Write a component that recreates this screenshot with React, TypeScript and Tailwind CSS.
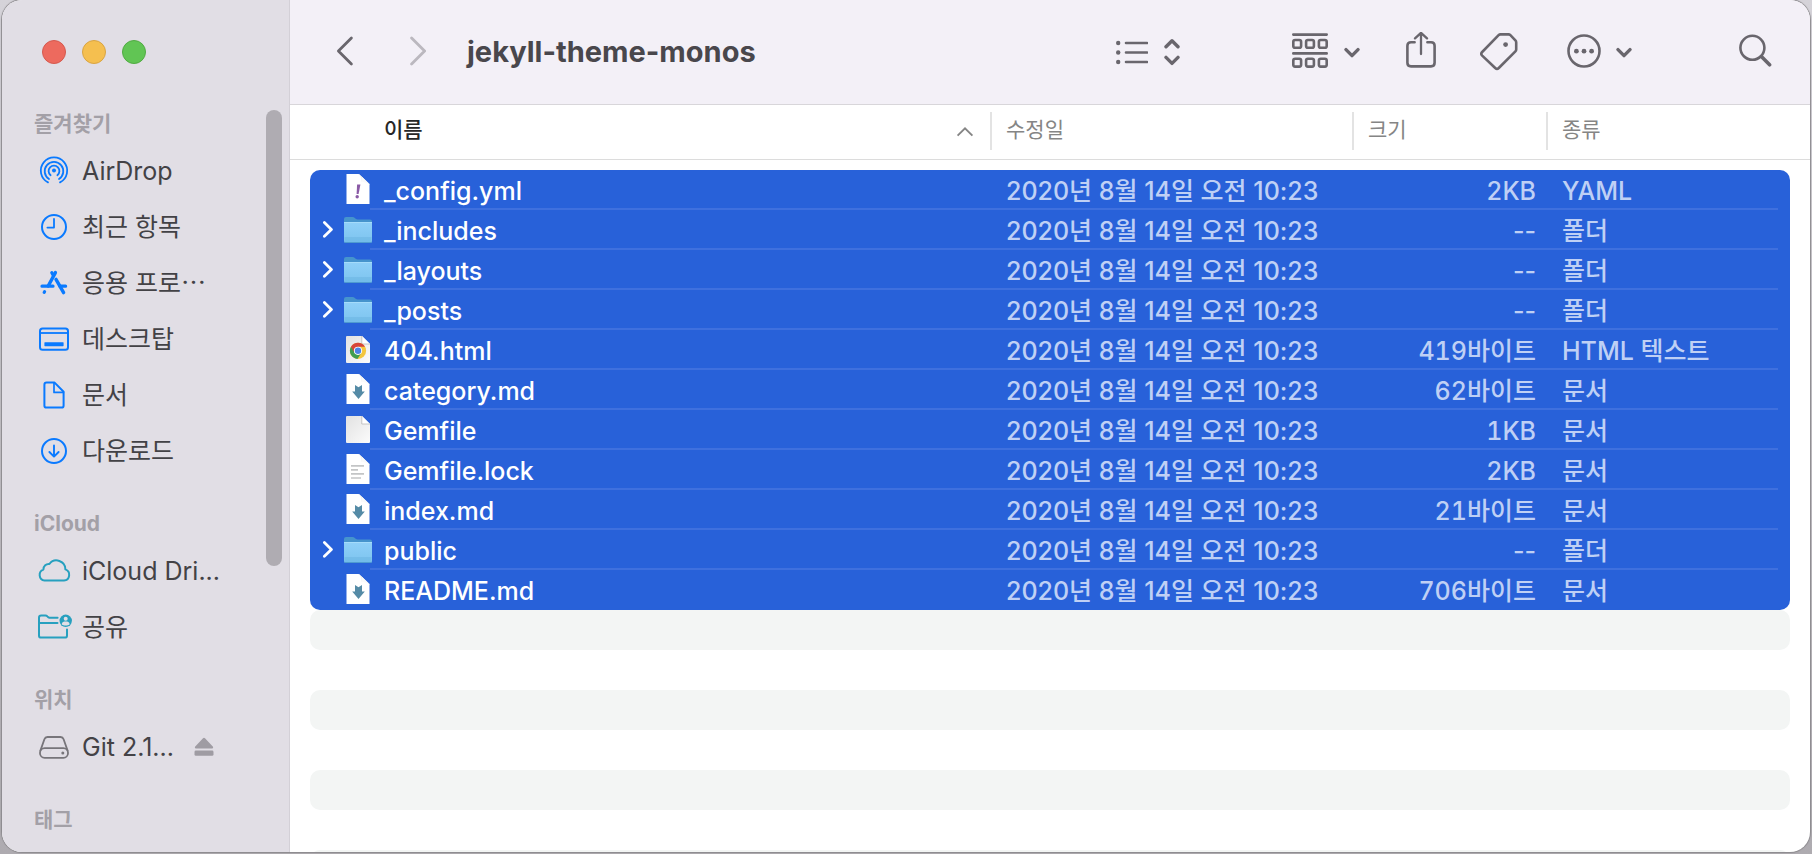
import type { ReactNode } from 'react';

type FileIconName = 'yaml' | 'folder' | 'chrome' | 'markdown' | 'blank' | 'text';

type FileRow = { name: string; icon: FileIconName; size: string; kind: string };

const MODIFIED = '2020년 8월 14일 오전 10:23';

const FILES: FileRow[] = [
  { name: '_config.yml', icon: 'yaml', size: '2KB', kind: 'YAML' },
  { name: '_includes', icon: 'folder', size: '--', kind: '폴더' },
  { name: '_layouts', icon: 'folder', size: '--', kind: '폴더' },
  { name: '_posts', icon: 'folder', size: '--', kind: '폴더' },
  { name: '404.html', icon: 'chrome', size: '419바이트', kind: 'HTML 텍스트' },
  { name: 'category.md', icon: 'markdown', size: '62바이트', kind: '문서' },
  { name: 'Gemfile', icon: 'blank', size: '1KB', kind: '문서' },
  { name: 'Gemfile.lock', icon: 'text', size: '2KB', kind: '문서' },
  { name: 'index.md', icon: 'markdown', size: '21바이트', kind: '문서' },
  { name: 'public', icon: 'folder', size: '--', kind: '폴더' },
  { name: 'README.md', icon: 'markdown', size: '706바이트', kind: '문서' },
];

/* ---------- File icons ---------- */

function FolderIcon() {
  return (
    <svg width="28" height="28" viewBox="0 0 28 28" aria-hidden="true">
      <defs>
        <linearGradient id="folder-front" x1="0" y1="0" x2="0" y2="1">
          <stop offset="0" stopColor="#8fd0f8" />
          <stop offset="1" stopColor="#7cc3ef" />
        </linearGradient>
      </defs>
      <path d="M0 3Q0 1 2 1H8.5Q9.8 1 10.8 2L12 3.1Q12.6 3.5 13.6 3.5H26Q28 3.5 28 5.5V12H0Z" fill="#4694cd" />
      <path d="M0 6.5H28V25Q28 27 26 27H2Q0 27 0 25Z" fill="url(#folder-front)" />
      <path d="M0 6.5H28" stroke="#a5dcfb" strokeWidth="1" />
      <path d="M0.5 22H27.5M0.5 24H27.5" stroke="#62aedd" strokeWidth="0.8" />
      <path d="M0.5 26.4H27.5" stroke="#4e9bd0" strokeWidth="1.2" />
    </svg>
  );
}

function PageIcon({ children, shaded = false }: { children?: ReactNode; shaded?: boolean }) {
  return (
    <svg width="28" height="32" viewBox="0 1 28 32" aria-hidden="true">
      <defs>
        <linearGradient id="page-fill" x1="0" y1="0" x2="1" y2="1">
          <stop offset="0" stopColor="#e2e2e2" />
          <stop offset="1" stopColor="#fbfbfb" />
        </linearGradient>
      </defs>
      {shaded ? (
        <>
          <path d="M3 3H18L26 11V29Q26 30 25 30H3Q2 30 2 29V4Q2 3 3 3Z" fill="url(#page-fill)" />
          <path d="M18 3L26 11H18Z" fill="#fff" />
          <path d="M17.8 3V11H26" fill="none" stroke="#b9b9b9" strokeWidth="0.8" />
        </>
      ) : (
        <>
          <path d="M2.5 1H15L25.5 11V31H2.5Z" fill="#fff" />
          <path d="M14 1H15L25.5 11V12C24 8.6 21 7.6 17 8.2C18 5 17 2.6 14 1Z" fill="#e2e3e6" />
          <path d="M17 8.2L24.6 10.4L17.6 3.6Z" fill="#f9f9f9" />
        </>
      )}
      {children}
    </svg>
  );
}

function ChromeBadge() {
  return (
    <g>
      <circle cx="14" cy="17.8" r="8.1" fill="#f4c63d" />
      <path d="M14 17.8L7 13.7A8.1 8.1 0 0 0 13.4 25.9L17.5 19.8Z" fill="#3f9d50" />
      <path d="M7 13.7A8.1 8.1 0 0 1 21 13.7H14V17.8L10.5 19.8Z" fill="#d6453a" />
      <circle cx="14" cy="17.8" r="4.1" fill="#fff" />
      <circle cx="14" cy="17.8" r="3.2" fill="#4c82e4" />
    </g>
  );
}

function FileIcon({ icon }: { icon: FileIconName }) {
  switch (icon) {
    case 'folder':
      return <FolderIcon />;
    case 'yaml':
      return (
        <PageIcon>
          <path d="M13.1 11.6H16.4L14.6 21H12.6Z" fill="#8a5aa5" />
          <circle cx="13.2" cy="23.8" r="1.7" fill="#8a5aa5" />
        </PageIcon>
      );
    case 'chrome':
      return (
        <PageIcon shaded>
          <ChromeBadge />
        </PageIcon>
      );
    case 'markdown':
      return (
        <PageIcon>
          <path d="M11 12L14.5 14.2L18 12V18.6H20.8L14.5 26L8.2 18.6H11Z" fill="#558ba6" />
        </PageIcon>
      );
    case 'blank':
      return <PageIcon shaded />;
    case 'text':
      return (
        <PageIcon>
          <path d="M7 12.8H20M7 16.8H14M7 20.8H20M7 25H17" stroke="#c3c5c6" strokeWidth="1.7" />
        </PageIcon>
      );
  }
}

/* ---------- Sidebar ---------- */

function StrokeIcon({ children, color }: { children: ReactNode; color: string }) {
  return (
    <svg
      width="36"
      height="32"
      viewBox="0 0 36 32"
      fill="none"
      stroke={color}
      strokeWidth="2"
      strokeLinecap="round"
      strokeLinejoin="round"
      aria-hidden="true"
      className="shrink-0"
    >
      {children}
    </svg>
  );
}

const BLUE = '#0a7aff';
const TEAL = '#27a0bf';
const GREY = '#77757a';

const airDropIcon = (
  <StrokeIcon color={BLUE}>
    <circle cx="18" cy="15.6" r="2" fill={BLUE} stroke="none" />
    <path d="M14.6 20.2A5.4 5.4 0 1 1 21.4 20.2" strokeWidth="1.8" />
    <path d="M13 24A9.3 9.3 0 1 1 23 24" strokeWidth="1.8" />
    <path d="M12 27.4A13.2 13.2 0 1 1 24 27.4" strokeWidth="1.8" />
  </StrokeIcon>
);

const recentsIcon = (
  <StrokeIcon color={BLUE}>
    <circle cx="18" cy="16" r="12" />
    <path d="M18 8V16.6H11.4" strokeWidth="1.8" />
  </StrokeIcon>
);

const appsIcon = (
  <StrokeIcon color={BLUE}>
    <path d="M19.4 5.6L12.2 19" strokeWidth="3.4" />
    <path d="M15.8 5.6L17.4 8.4" strokeWidth="3.2" />
    <path d="M20 12.4L27.6 25.6" strokeWidth="3.4" />
    <path d="M6 19.2H17M24 19.2H29.6" strokeWidth="3.2" />
    <path d="M8.6 24.6L8.2 25.4" strokeWidth="3.2" />
  </StrokeIcon>
);

const desktopIcon = (
  <StrokeIcon color={BLUE}>
    <rect x="4" y="5.4" width="28" height="21.4" rx="2.6" />
    <path d="M4 10H32" strokeWidth="1.8" strokeLinecap="butt" />
    <rect x="8.4" y="19.2" width="19.2" height="4" rx="0.6" fill={BLUE} stroke="none" />
  </StrokeIcon>
);

const documentIcon = (
  <StrokeIcon color={BLUE}>
    <path d="M10.6 3.6H18.6L27.6 12.8V26.4Q27.6 28.6 25.4 28.6H10.6Q8.4 28.6 8.4 26.4V5.8Q8.4 3.6 10.6 3.6Z" />
    <path d="M18 4V13.4H27.4" strokeWidth="1.7" />
  </StrokeIcon>
);

const downloadIcon = (
  <StrokeIcon color={BLUE}>
    <circle cx="18" cy="16" r="12" />
    <path d="M18 10.4V21.2M13.4 17L18 21.6L22.6 17" strokeWidth="1.9" />
  </StrokeIcon>
);

const cloudIcon = (
  <StrokeIcon color={TEAL}>
    <path d="M8.6 25.6A5.7 5.7 0 0 1 7.4 14.6C7.4 11 10.2 8.6 13.4 9A8.9 8.9 0 0 1 29.4 14.4A5.8 5.8 0 0 1 28 25.6Z" strokeWidth="2" />
  </StrokeIcon>
);

const sharedIcon = (
  <StrokeIcon color={TEAL}>
    <path d="M31 18.6V24.4Q31 26.6 28.8 26.6H5.2Q3 26.6 3 24.4V6.8Q3 4.6 5.2 4.6H9.4Q10.6 4.6 11.4 5.4L12.6 6.4Q13.2 6.8 14.2 6.8H21.6" strokeWidth="2" />
    <path d="M3 12H21.6" strokeWidth="1.8" />
    <circle cx="29.7" cy="9.8" r="6.2" fill={TEAL} stroke="none" />
    <circle cx="29.7" cy="7.8" r="2" fill="#e1dee5" stroke="none" />
    <path d="M25.7 13.2C26.1 10.9 27.7 10.6 29.7 10.6S33.3 10.9 33.7 13.2C32.5 14.3 31.3 14.5 29.7 14.5S26.9 14.3 25.7 13.2Z" fill="#e1dee5" stroke="none" />
  </StrokeIcon>
);

const driveIcon = (
  <StrokeIcon color={GREY}>
    <path d="M4.4 19.6L8.4 8.2Q9.2 6 11.4 6H24.6Q26.8 6 27.6 8.2L31.6 19.6" strokeWidth="1.8" />
    <rect x="4" y="17.2" width="28" height="9.6" rx="4.6" strokeWidth="1.8" />
    <circle cx="26.8" cy="22" r="1.5" fill={GREY} stroke="none" />
  </StrokeIcon>
);

type SidebarEntry = { label: string; icon: ReactNode; ejectable?: boolean };

const SECTIONS: { title: string; items: SidebarEntry[] }[] = [
  {
    title: '즐겨찾기',
    items: [
      { label: 'AirDrop', icon: airDropIcon },
      { label: '최근 항목', icon: recentsIcon },
      { label: '응용 프로⋯', icon: appsIcon },
      { label: '데스크탑', icon: desktopIcon },
      { label: '문서', icon: documentIcon },
      { label: '다운로드', icon: downloadIcon },
    ],
  },
  {
    title: 'iCloud',
    items: [
      { label: 'iCloud Dri...', icon: cloudIcon },
      { label: '공유', icon: sharedIcon },
    ],
  },
  { title: '위치', items: [{ label: 'Git 2.1...', icon: driveIcon, ejectable: true }] },
  { title: '태그', items: [] },
];

function Sidebar() {
  return (
    <aside className="relative flex w-72 shrink-0 flex-col overflow-hidden border-r border-[#d3d0d7] bg-[#e1dee5]">
      <div className="flex h-20 shrink-0 items-center gap-4 pt-6 pl-10">
        <button type="button" aria-label="닫기" className="size-6 rounded-full border border-[#d5594e] bg-[#ed6a5e]" />
        <button type="button" aria-label="최소화" className="size-6 rounded-full border border-[#d9a443] bg-[#f5bf4f]" />
        <button type="button" aria-label="확대" className="size-6 rounded-full border border-[#51ab43] bg-[#61c554]" />
      </div>
      <nav aria-label="사이드바">
        {SECTIONS.map((section) => (
          <section key={section.title}>
            <h2 className="flex h-16 items-center pt-6 pl-8 text-[21px] font-bold text-[#a3a0a7]">{section.title}</h2>
            <ul>
              {section.items.map((item) => (
                <li key={item.label} className="flex h-14 items-center pb-0.5 pl-[34px]">
                  <a href="#" className="flex items-center gap-2.5 text-[25px] whitespace-nowrap text-[#434246]">
                    {item.icon}
                    <span className="pt-0.5">{item.label}</span>
                  </a>
                  {item.ejectable && (
                    <button type="button" aria-label="추출" className="ml-5">
                      <svg width="20" height="20" viewBox="0 0 20 20" fill="#9f9ca3" aria-hidden="true">
                        <path d="M10 0.8Q10.6 0.8 11 1.3L19 9.8Q19.6 11.2 18.4 11.4H1.6Q0.4 11.2 1 9.8L9 1.3Q9.4 0.8 10 0.8Z" />
                        <rect x="0.5" y="13.6" width="19" height="5.2" rx="1.4" />
                      </svg>
                    </button>
                  )}
                </li>
              ))}
            </ul>
          </section>
        ))}
      </nav>
      <div className="absolute top-[110px] right-[7px] h-[456px] w-4 rounded-full bg-[#afacb2]" />
    </aside>
  );
}

/* ---------- Toolbar ---------- */

function ToolIcon({ width, children }: { width: number; children: ReactNode }) {
  return (
    <svg
      width={width}
      height="40"
      viewBox={`0 0 ${width} 40`}
      fill="none"
      stroke="#69666d"
      strokeWidth="2.6"
      strokeLinecap="round"
      strokeLinejoin="round"
      aria-hidden="true"
    >
      {children}
    </svg>
  );
}

function DownChevron() {
  return (
    <ToolIcon width={16}>
      <path d="M2 17.6L8 23.6L14 17.6" strokeWidth="3.4" />
    </ToolIcon>
  );
}

function Toolbar() {
  return (
    <header className="flex h-[105px] shrink-0 items-center border-b border-[#d8d6da] bg-[#f3f0f7] pr-[38px] pl-[46px]">
      <button type="button" aria-label="뒤로">
        <ToolIcon width={18}>
          <path d="M15.4 6L2.4 19L15.4 32" strokeWidth="2.8" />
        </ToolIcon>
      </button>
      <button type="button" aria-label="앞으로" className="ml-[55px] opacity-40">
        <ToolIcon width={18}>
          <path d="M2.6 6L15.6 19L2.6 32" strokeWidth="2.8" />
        </ToolIcon>
      </button>
      <h1 className="ml-10 flex-1 text-[29px] font-bold text-[#49474c]">jekyll-theme-monos</h1>
      <button type="button" aria-label="목록 보기" className="flex items-center gap-4">
        <ToolIcon width={32}>
          <path d="M10 11H31M10 20.5H31M10 30H31" />
          <g fill="#69666d" stroke="none">
            <circle cx="2.2" cy="11" r="2.2" />
            <circle cx="2.2" cy="20.5" r="2.2" />
            <circle cx="2.2" cy="30" r="2.2" />
          </g>
        </ToolIcon>
        <ToolIcon width={16}>
          <path d="M2 14.8L8 8.8L14 14.8M2 25.4L8 31.4L14 25.4" strokeWidth="3.4" />
        </ToolIcon>
      </button>
      <button type="button" aria-label="그룹" className="ml-28 flex items-center gap-4">
        <ToolIcon width={36}>
          <path d="M1.3 2.6H34.7M1.3 21.4H34.7" />
          <rect x="1.3" y="8" width="7.8" height="7.8" rx="1.8" />
          <rect x="14.1" y="8" width="7.8" height="7.8" rx="1.8" />
          <rect x="26.9" y="8" width="7.8" height="7.8" rx="1.8" />
          <rect x="1.3" y="26.8" width="7.8" height="7.8" rx="1.8" />
          <rect x="14.1" y="26.8" width="7.8" height="7.8" rx="1.8" />
          <rect x="26.9" y="26.8" width="7.8" height="7.8" rx="1.8" />
        </ToolIcon>
        <DownChevron />
      </button>
      <button type="button" aria-label="공유" className="ml-[46px]">
        <ToolIcon width={30}>
          <path d="M8.6 10.2H5Q1.4 10.2 1.4 13.8V30.8Q1.4 34.4 5 34.4H25Q28.6 34.4 28.6 30.8V13.8Q28.6 10.2 25 10.2H21.4" />
          <path d="M15 22V1.4M9 6.4L15 0.8L21 6.4" strokeWidth="2.3" />
        </ToolIcon>
      </button>
      <button type="button" aria-label="태그" className="ml-11">
        <ToolIcon width={38}>
          <path d="M20.6 2.4H28.4Q29.6 2.4 30.4 3.2L35.4 8.4Q36.2 9.2 36.2 10.4V17.4Q36.2 18.6 35.4 19.4L18.8 36Q17 37.6 15.2 36L2.2 23.6Q0.4 21.8 2.2 20L18.6 3.2Q19.4 2.4 20.6 2.4Z" strokeWidth="2.6" />
          <circle cx="25.6" cy="12.6" r="2.4" fill="#69666d" stroke="none" />
        </ToolIcon>
      </button>
      <button type="button" aria-label="동작" className="ml-[49px] flex items-center gap-[15px]">
        <ToolIcon width={34}>
          <circle cx="17" cy="19" r="15.5" />
          <g fill="#69666d" stroke="none">
            <circle cx="9.4" cy="19.2" r="2.4" />
            <circle cx="17" cy="19.2" r="2.4" />
            <circle cx="24.6" cy="19.2" r="2.4" />
          </g>
        </ToolIcon>
        <DownChevron />
      </button>
      <button type="button" aria-label="검색" className="ml-[107px]">
        <ToolIcon width={33}>
          <circle cx="13.4" cy="15.8" r="12" />
          <path d="M22.4 24.6L30.6 32.8" strokeWidth="3.6" />
        </ToolIcon>
      </button>
    </header>
  );
}

/* ---------- File list ---------- */

function HeaderCell({ label }: { label: string }) {
  return (
    <th scope="col" className="border-b border-[#dcdcdc] p-0 pt-[7px] pb-[9px] text-left font-normal">
      <div className="flex h-[38px] items-center border-l-2 border-[#e3e3e3] pb-0.5 pl-3.5 text-[#858585]">{label}</div>
    </th>
  );
}

function FileTable() {
  return (
    <table className="w-full shrink-0 table-fixed border-separate border-spacing-0">
      <colgroup>
        <col />
        <col className="w-[362px]" />
        <col className="w-[194px]" />
        <col className="w-[264px]" />
      </colgroup>
      <thead>
        <tr className="text-[21px]">
          <th scope="col" aria-sort="ascending" className="border-b border-[#dcdcdc] p-0 pt-[7px] pb-[9px] text-left font-medium">
            <button type="button" className="flex h-[38px] w-full items-center justify-between pr-4 pb-0.5 pl-[94px] text-[#272727]">
              이름
              <svg width="18" height="12" viewBox="0 0 18 12" fill="none" stroke="#858585" strokeWidth="1.9" className="mt-1" aria-hidden="true">
                <path d="M1.6 9.6L9 2.4L16.4 9.6" />
              </svg>
            </button>
          </th>
          <HeaderCell label="수정일" />
          <HeaderCell label="크기" />
          <HeaderCell label="종류" />
        </tr>
      </thead>
      <tbody className="text-[25px] font-medium text-[#bfd0f5]">
        <tr aria-hidden="true" className="h-2.5">
          <td colSpan={4} className="p-0" />
        </tr>
        {FILES.map((file, index) => {
          const first = index === 0;
          const last = index === FILES.length - 1;
          const line = last ? 'border-b-2 border-transparent' : 'border-b-2 border-[#3f70de]';
          const digits = file.icon === 'folder' ? '' : 'tabular-nums';
          return (
            <tr key={file.name} className="h-10 whitespace-nowrap">
              <td className="p-0 pl-5">
                <div className={`flex h-10 bg-[#2861d9] ${first ? 'rounded-tl-[10px]' : ''} ${last ? 'rounded-bl-[10px]' : ''}`}>
                  <div className="flex w-[60px] shrink-0 items-center pl-3">
                    <span className="flex w-[22px] shrink-0">
                      {file.icon === 'folder' && (
                        <button type="button" aria-label={`${file.name} 펼치기`}>
                          <svg width="12" height="18" viewBox="0 0 12 18" fill="none" stroke="#fff" strokeWidth="2.8" strokeLinecap="round" strokeLinejoin="round" aria-hidden="true">
                            <path d="M2.4 1.6L9.4 8.4L2.4 15.2" />
                          </svg>
                        </button>
                      )}
                    </span>
                    <span className="shrink-0">
                      <FileIcon icon={file.icon} />
                    </span>
                  </div>
                  <div className={`flex flex-1 items-center pt-1.5 pl-3.5 text-white ${line}`}>{file.name}</div>
                </div>
              </td>
              <td className="p-0">
                <div className="h-10 bg-[#2861d9]">
                  <div className={`flex h-10 items-center pt-1.5 pl-4 ${line}`}>{MODIFIED}</div>
                </div>
              </td>
              <td className="p-0">
                <div className="h-10 bg-[#2861d9]">
                  <div className={`flex h-10 items-center justify-end pt-1.5 pr-2.5 ${digits} ${line}`}>{file.size}</div>
                </div>
              </td>
              <td className="p-0 pr-5">
                <div className={`h-10 bg-[#2861d9] pr-3 ${first ? 'rounded-tr-[10px]' : ''} ${last ? 'rounded-br-[10px]' : ''}`}>
                  <div className={`flex h-10 items-center pt-1.5 pl-4 ${line}`}>{file.kind}</div>
                </div>
              </td>
            </tr>
          );
        })}
      </tbody>
    </table>
  );
}

function EmptyStripes() {
  return (
    <div className="flex min-h-0 flex-1 flex-col gap-10 overflow-hidden px-5" aria-hidden="true">
      {[0, 1, 2, 3].map((stripe) => (
        <div key={stripe} className="h-10 shrink-0 rounded-[10px] bg-[#f3f5f4]" />
      ))}
    </div>
  );
}

export default function App() {
  return (
    <div
      className="flex h-screen bg-linear-to-b from-[#d5d3d9] to-[#aeabb0] px-0.5 pb-0.5 antialiased"
      style={{ fontFamily: 'Inter, "Noto Sans CJK KR", sans-serif' }}
    >
      <div className="flex min-w-0 flex-1 overflow-hidden rounded-[20px] bg-white shadow-[0_0_1px_1px_#8c8a8e]">
        <Sidebar />
        <main className="flex min-w-0 flex-1 flex-col">
          <Toolbar />
          <FileTable />
          <EmptyStripes />
        </main>
      </div>
    </div>
  );
}
